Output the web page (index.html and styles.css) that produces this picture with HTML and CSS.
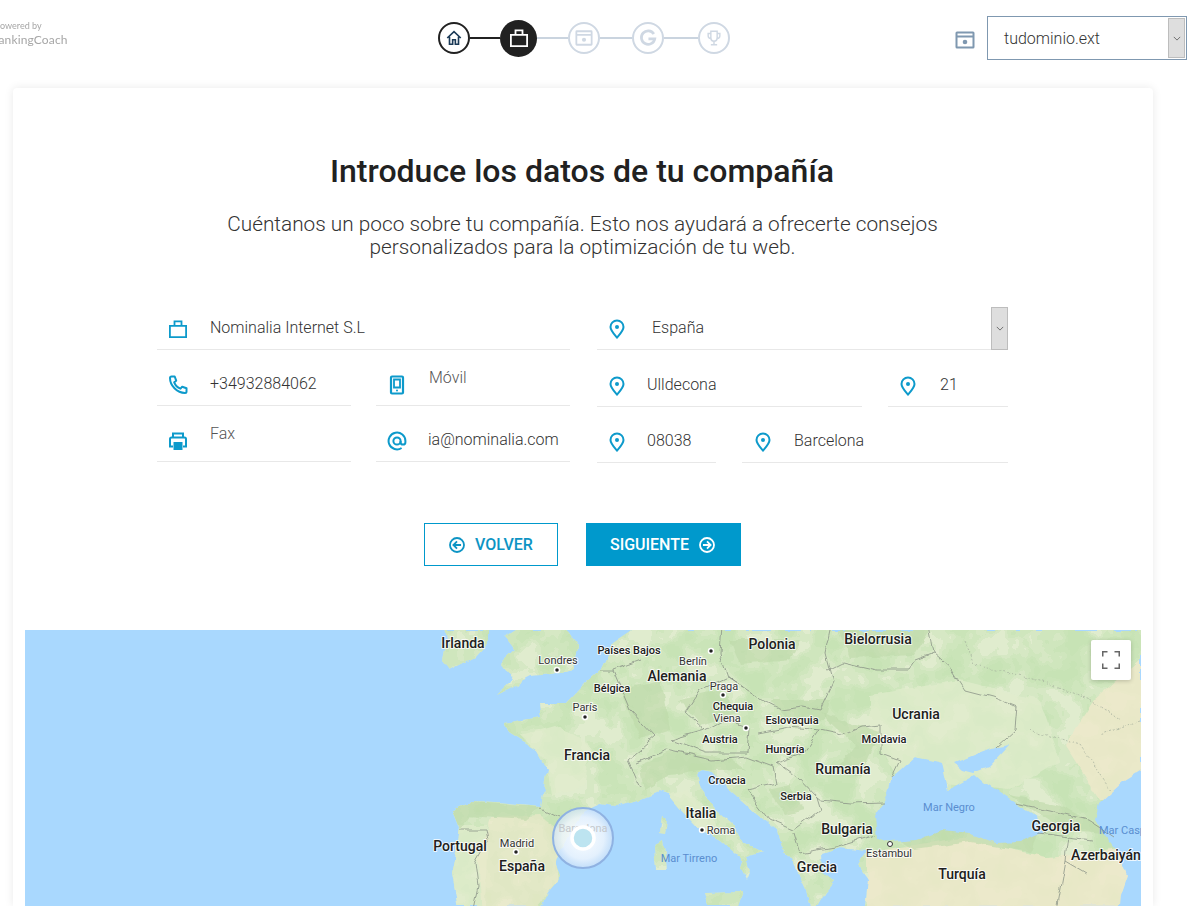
FILE: index.html
```html
<!DOCTYPE html>
<html lang="es">
<head>
<meta charset="utf-8">
<title>Introduce los datos de tu compañía</title>
<link rel="stylesheet" href="styles.css">
</head>
<body>
<svg class="defs" width="0" height="0" aria-hidden="true">
  <symbol id="i-case" viewBox="0 0 20 20"><path d="M1.900 6.900h16.200v11.200H1.900zM6.500 6.900V2.300h7v4.600" fill="none" stroke="currentColor" stroke-width="1.800"/></symbol>
  <symbol id="i-pin" viewBox="0 0 20 20"><path d="M10 18.500C6.500 14.500 3.500 11.500 3.500 8a6.500 6.500 0 0 1 13 0c0 3.500-3 6.500-6.500 10.500z" fill="none" stroke="currentColor" stroke-width="2"/><circle cx="10" cy="8" r="2" fill="currentColor"/></symbol>
  <symbol id="i-phone" viewBox="0 0 20 20"><path d="M3.500 1.500h3.200l1.500 4.200-2 1.600c1 2.600 3.500 5.200 6.300 6.400l1.700-2 4.300 1.600v3.200a1.500 1.500 0 0 1-1.500 1.500C9 18 2 10.500 2 3a1.500 1.500 0 0 1 1.500-1.500z" fill="none" stroke="currentColor" stroke-width="2" stroke-linejoin="round"/></symbol>
  <symbol id="i-mobile" viewBox="0 0 20 20"><path d="M5 1.500h10a1 1 0 0 1 1 1v15a1 1 0 0 1-1 1H5a1 1 0 0 1-1-1v-15a1 1 0 0 1 1-1z" fill="none" stroke="currentColor" stroke-width="2.200"/><path d="M7 4.500h6v8H7z" fill="none" stroke="currentColor" stroke-width="1.800"/><circle cx="10" cy="15.500" r="1" fill="currentColor"/></symbol>
  <symbol id="i-print" viewBox="0 0 20 20"><path d="M5 6V2.500h10V6" fill="none" stroke="currentColor" stroke-width="2"/><path d="M5 15.500H2V8a1.500 1.500 0 0 1 1.500-1.500h13A1.500 1.500 0 0 1 18 8v7.500h-3" fill="none" stroke="currentColor" stroke-width="2"/><path d="M5.500 11h9v8h-9z" fill="currentColor"/></symbol>
  <symbol id="i-at" viewBox="0 0 20 20"><circle cx="10" cy="10" r="3.600" fill="none" stroke="currentColor" stroke-width="2"/><path d="M13.600 10v1.200a2.400 2.400 0 0 0 4.800 0V10a8.400 8.400 0 1 0-3.800 7" fill="none" stroke="currentColor" stroke-width="2"/></symbol>
  <symbol id="i-web" viewBox="0 0 20 20"><path d="M2 2.500h16a.5.500 0 0 1 .5.500v14a.5.500 0 0 1-.5.500H2a.5.500 0 0 1-.5-.500V3a.5.500 0 0 1 .5-.500zM1.500 6.500h17" fill="none" stroke="currentColor" stroke-width="2"/><circle cx="10" cy="12" r="2.300" fill="currentColor"/></symbol>
  <symbol id="i-back" viewBox="0 0 20 20"><circle cx="10" cy="10" r="7.800" fill="none" stroke="currentColor" stroke-width="2"/><path d="M14.500 10h-8M10 6l-4 4 4 4" fill="none" stroke="currentColor" stroke-width="2"/></symbol>
  <symbol id="i-next" viewBox="0 0 20 20"><circle cx="10" cy="10" r="7.800" fill="none" stroke="currentColor" stroke-width="2"/><path d="M5.500 10h8M10 6l4 4-4 4" fill="none" stroke="currentColor" stroke-width="2"/></symbol>
</svg>

<header class="topbar">
  <div class="brand">
    <span class="brand-small">powered by</span>
    <span class="brand-name">rankingCoach</span>
  </div>
  <nav class="stepper">
    <span class="step step-done">
      <svg class="step-icon" viewBox="0 0 20 20"><path d="M2.500 10L10 3l7.500 7M5 8.500V17h3.500v-5h3v5H15V8.500" fill="none" stroke="currentColor" stroke-width="1.800"/></svg>
    </span>
    <span class="link link-a link-on"></span>
    <span class="step step-current"><svg class="step-icon-lg"><use href="#i-case"/></svg></span>
    <span class="link link-b"></span>
    <span class="step"><svg class="step-icon"><use href="#i-web"/></svg></span>
    <span class="link link-c"></span>
    <span class="step">
      <svg class="step-icon" viewBox="0 0 20 20"><path d="M16.500 5.500A7.500 7.500 0 1 0 17.500 11H10.500" fill="none" stroke="currentColor" stroke-width="3"/></svg>
    </span>
    <span class="link link-d"></span>
    <span class="step">
      <svg class="step-icon" viewBox="0 0 20 20"><path d="M6.500 2.500h7V10a3.500 3.500 0 0 1-7 0zM6.500 5H3.500v2.500a3 3 0 0 0 3 3M13.500 5h3v2.500a3 3 0 0 1-3 3M10 13.500V17M6.500 17.500h7" fill="none" stroke="currentColor" stroke-width="1.600"/></svg>
    </span>
  </nav>
  <div class="domain">
    <svg class="domain-icon"><use href="#i-web"/></svg>
    <div class="domain-select">
      <span class="domain-value">tudominio.ext</span>
      <span class="select-btn"><svg class="chev" viewBox="0 0 10 6"><path d="M1 1l4 4 4-4" fill="none" stroke="currentColor" stroke-width="1"/></svg></span>
    </div>
  </div>
</header>

<main class="card">
  <h1 class="title">Introduce los datos de tu compañía</h1>
  <p class="lead">Cuéntanos un poco sobre tu compañía. Esto nos ayudará a ofrecerte consejos<br>personalizados para la optimización de tu web.</p>

  <form class="form">
    <div class="col">
      <div class="row">
        <label class="field f-full"><svg class="ico"><use href="#i-case"/></svg><span class="val">Nominalia Internet S.L</span></label>
      </div>
      <div class="row">
        <label class="field f-half"><svg class="ico"><use href="#i-phone"/></svg><span class="val">+34932884062</span></label>
        <label class="field f-half"><svg class="ico"><use href="#i-mobile"/></svg><span class="val ph">Móvil</span></label>
      </div>
      <div class="row">
        <label class="field f-half"><svg class="ico"><use href="#i-print"/></svg><span class="val ph">Fax</span></label>
        <label class="field f-half"><svg class="ico"><use href="#i-at"/></svg><span class="val val-mail">ia@nominalia.com</span></label>
      </div>
    </div>
    <div class="col">
      <div class="row row-first">
        <label class="field f-full f-select"><svg class="ico ico-pin"><use href="#i-pin"/></svg><span class="val val-country">España</span>
          <span class="select-btn select-btn-tall"><svg class="chev" viewBox="0 0 10 6"><path d="M1 1l4 4 4-4" fill="none" stroke="currentColor" stroke-width="1"/></svg></span>
        </label>
      </div>
      <div class="row">
        <label class="field f-street"><svg class="ico ico-pin"><use href="#i-pin"/></svg><span class="val val-near">Ulldecona</span></label>
        <label class="field f-num"><svg class="ico ico-pin"><use href="#i-pin"/></svg><span class="val val-far">21</span></label>
      </div>
      <div class="row">
        <label class="field f-zip"><svg class="ico ico-pin"><use href="#i-pin"/></svg><span class="val val-near">08038</span></label>
        <label class="field f-city"><svg class="ico ico-pin"><use href="#i-pin"/></svg><span class="val val-city">Barcelona</span></label>
      </div>
    </div>
  </form>

  <div class="actions">
    <button type="button" class="btn btn-ghost"><svg class="btn-ico"><use href="#i-back"/></svg>VOLVER</button>
    <button type="button" class="btn btn-solid">SIGUIENTE<svg class="btn-ico"><use href="#i-next"/></svg></button>
  </div>

  <section class="map">
    <svg class="map-svg" viewBox="25 630 1116 276" width="1116" height="276">
      <defs>
        <clipPath id="landclip"><path d="M640 625H1150V915H865L869 880 858 865 866 850 840 847 822 853 823 872 835 882 826 892 812 915 806 890 793 863 781 847 777 830 755 813 732 793 712 772 702 770 697 773 701 790 716 810 732 823 743 843 762 852 747 857 751 870 747 880 741 868 743 860 720 840 697 827 678 807 668 795 659 792 640 800 617 807 600 805 585 812 572 828 562 848 556 860 561 877 548 892 536 915H459L452 873 455 860 459 827 453 812 471 802 497 803 530 806 541 807 547 770 536 750 509 733 505 723 540 717 538 703 566 703 585 683 600 670 613 643Z
          M444 625H490V640L475 657 450 670 442 660 446 640Z
          M524 625H563L578 647 574 670 551 675 532 677 497 695 513 680 501 663 515 650 505 637Z
          M663 817L669 822 667 833 661 832Z M653 847L663 840 667 870 655 870Z M705 893L743 892 735 915H712Z"/></clipPath>
        <filter id="mottle" x="0" y="0" width="100%" height="100%" color-interpolation-filters="sRGB">
          <feTurbulence type="fractalNoise" baseFrequency="0.035" numOctaves="3" seed="7"/>
          <feColorMatrix type="matrix" values="0 0 0 0 0.78  0 0 0 0 0.89  0 0 0 0 0.71  1.8 0 0 0 -0.35"/>
          <feComponentTransfer><feFuncA type="discrete" tableValues="0 0 0.4 0.7 0.9 1"/></feComponentTransfer>
        </filter>
        <filter id="rough" filterUnits="userSpaceOnUse" x="25" y="630" width="1116" height="276" color-interpolation-filters="sRGB">
          <feTurbulence type="fractalNoise" baseFrequency="0.07" numOctaves="2" seed="3"/>
          <feDisplacementMap in="SourceGraphic" scale="7" xChannelSelector="R" yChannelSelector="G"/>
        </filter>
        <radialGradient id="halo"><stop offset="0" stop-color="#fff" stop-opacity=".95"/><stop offset=".7" stop-color="#eef5fd" stop-opacity=".85"/><stop offset="1" stop-color="#cfe2f8" stop-opacity=".7"/></radialGradient>
      </defs>
      <rect class="sea" x="25" y="630" width="1116" height="276"/>
      <g filter="url(#rough)">
        <g clip-path="url(#landclip)">
          <rect class="land" x="25" y="630" width="1116" height="276"/>
          <rect x="25" y="630" width="1116" height="276" filter="url(#mottle)"/>
          <path class="plain" d="M870 695L960 680 1040 700 1060 760 1010 790 900 780 870 730Z"/>
          <path class="plain" d="M640 800L690 790 720 830 700 840 660 805Z"/>
          <path class="plain" d="M520 735L555 725 590 745 585 785 550 795 545 760Z"/>
          <path class="plain" d="M452 825L488 825 485 906H452Z"/>
          <path class="sand" d="M1095 700L1141 660V800L1100 800 1065 745Z"/>
          <path class="sand" d="M868 852L960 838 1050 858 1141 845V915H868Z"/>
          <path class="sand-soft" d="M492 818L540 815 560 830 558 880 530 915H482L478 860Z"/>
          <path class="forest" d="M453 812L471 802 540 807 525 820 470 816 460 830Z"/>
          <path class="forest" d="M640 765L670 752 730 758 745 770 700 770 670 775 645 790Z"/>
          <path class="forest" d="M820 712L880 732 860 775 835 770 855 745Z"/>
          <path class="forest" d="M770 700L830 700 825 720 790 722Z"/>
          <path class="forest" d="M768 790L790 785 805 810 785 815Z"/>
          <path class="forest" d="M1010 795L1060 805 1115 835 1060 828Z"/>
          <path class="forest" d="M890 835L960 822 1040 830 1030 852 970 842 915 850Z"/>
          <path class="forest" d="M680 700L720 690 740 712 700 725Z"/>
          <path class="forest" d="M730 640L800 640 790 660 740 665Z"/>
          <path class="forest" d="M840 630L930 630 915 655 850 658Z"/>
          <path class="forest" d="M620 690L660 680 670 730 640 740Z"/>
        </g>
        <path class="sea" d="M875 817L887 797 892 777 915 757 942 763 948 790 975 775 984 783 1015 803 1038 817 1042 833 1022 842 996 843 969 833 942 830 915 840 892 842 877 837Z"/>
        <path class="sea" d="M954 763L992 748 1009 745 988 767 973 773 962 770Z"/>
        <path class="sea" d="M1150 765L1124 781 1099 804 1095 819 1105 835 1118 852 1127 875 1120 895 1118 915H1150Z"/>
        <g class="borders">
          <path d="M722 625L720 653 728 677 743 687 762 700 781 710 804 707 820 710 833 683 825 653 831 625"/>
          <path d="M827 670L843 662 877 670 908 670 915 660 934 653 929 625"/>
          <path d="M934 653L950 667 965 690 992 697 1017 707 1015 730 996 747"/>
          <path d="M758 733L789 727 820 730 843 735 862 727 881 725 881 753 900 760 892 777"/>
          <path d="M820 730L804 753 777 763 797 777 816 797 820 800 850 803 885 802"/>
          <path d="M670 740L705 753 747 753 749 728 724 720 705 730 670 740"/>
          <path d="M613 670L630 710 655 737 628 760 640 787"/>
          <path d="M636 763L667 750 712 760 747 757 774 767 777 783 747 790 770 820 793 830 820 810 816 797"/>
          <path d="M793 833L799 853 835 847 858 840 875 835"/>
          <path d="M743 687L728 677 700 690 685 712 705 730"/>
          <path d="M1015 803L1049 810 1088 820 1114 837"/>
          <path d="M1038 833L1068 837 1091 840"/>
          <path d="M1065 860L1087 873M1065 860L1068 837M1065 860L1055 915"/>
          <path d="M459 830L486 830 488 840 475 863 478 887 473 910"/>
          <path d="M540 808L559 817"/>
          <path d="M600 670L613 670 640 660"/>
        </g>
        <g class="dashes">
          <path d="M965 640L975 665 1040 680 1090 700 1120 720"/>
          <path d="M1030 730L1080 745 1110 790M1141 720L1100 735"/>
        </g>
      </g>

      <g class="dots">
        <circle cx="557" cy="670" r="2.500"/><circle cx="711" cy="651" r="2.500"/><circle cx="723" cy="695" r="2.500"/>
        <circle cx="585" cy="717" r="2.500"/><circle cx="746" cy="728" r="2.500"/><circle cx="702" cy="830" r="2.500"/>
        <circle cx="516" cy="852" r="2.500"/>
      </g>
      <circle class="dot-open" cx="890" cy="844" r="2.500"/>

      <g class="lbl lbl-l">
        <text x="463" y="648">Irlanda</text><text x="772" y="649">Polonia</text><text x="878" y="644">Bielorrusia</text>
        <text x="677" y="681">Alemania</text><text x="916" y="719">Ucrania</text><text x="587" y="760">Francia</text>
        <text x="843" y="774">Rumanía</text><text x="701" y="818">Italia</text><text x="1056" y="831">Georgia</text>
        <text x="847" y="834">Bulgaria</text><text x="460" y="851">Portugal</text><text x="1106" y="860">Azerbaiyán</text>
        <text x="522" y="871">España</text><text x="817" y="872">Grecia</text><text x="962" y="879">Turquía</text>
      </g>
      <g class="lbl lbl-m">
        <text x="629" y="654">Países Bajos</text><text x="612" y="692">Bélgica</text><text x="733" y="710">Chequia</text>
        <text x="792" y="724">Eslovaquia</text><text x="884" y="743">Moldavia</text><text x="720" y="743">Austria</text>
        <text x="785" y="753">Hungría</text><text x="727" y="784">Croacia</text><text x="796" y="800">Serbia</text>
      </g>
      <g class="lbl lbl-s">
        <text x="558" y="664">Londres</text><text x="693" y="665">Berlín</text><text x="724" y="690">Praga</text>
        <text x="585" y="711">París</text><text x="727" y="722">Viena</text><text x="721" y="834">Roma</text>
        <text x="517" y="847">Madrid</text><text x="889" y="857">Estambul</text>
      </g>
      <g class="lbl lbl-w">
        <text x="949" y="811">Mar Negro</text><text x="689" y="862">Mar Tirreno</text><text x="1127" y="834">Mar Caspio</text>
      </g>

      <circle class="halo" cx="583" cy="838" r="30"/>
      <text class="halo-text" x="583" y="832">Barcelona</text>
      <circle class="core" cx="583" cy="838" r="11"/>
    </svg>
    <button type="button" class="fullscreen" aria-label="Pantalla completa">
      <svg class="fs-ico" viewBox="0 0 18 18"><path d="M0 5.500V0h5.500M12.500 0H18v5.500M18 12.500V18h-5.500M5.500 18H0v-5.500" fill="none" stroke="currentColor" stroke-width="3"/></svg>
    </button>
  </section>
</main>
</body>
</html>
```
FILE: styles.css
```css
* { box-sizing: border-box; }
html, body { margin: 0; height: 906px; overflow: hidden; }
body { background: #fff; font-family: Roboto, "Liberation Sans", sans-serif; color: #212121; }
.defs { display: block; height: 0; }

.topbar { height: 88px; display: grid; grid-template-columns: 438px 292px 1fr; padding-bottom: 12px; align-items: center; }
.brand { display: flex; flex-direction: column; margin-left: -5px; margin-top: -8px; font-family: Lato, "Liberation Sans", sans-serif; color: #a6a6a6; filter: blur(.3px); }
.brand-small { font-size: 9px; line-height: 12px; }
.brand-name { font-size: 12px; line-height: 16px; margin-left: -1px; letter-spacing: .15px; }

.stepper { display: flex; align-items: center; }
.step { width: 32px; height: 32px; flex: none; border-radius: 50%; border: 2px solid #cfd8e3; color: #cfd8e3; display: flex; align-items: center; justify-content: center; background: #fff; }
.step-done { border-color: #212121; color: #1b3a57; }
.step-current { width: 37px; height: 37px; border: 0; background: #212121; color: #fff; }
.step-icon { width: 18px; height: 18px; }
.step-icon-lg { width: 20px; height: 20px; }
.link { height: 2px; background: #cad4df; flex: none; }
.link-a { width: 30px; }
.link-b { width: 31px; }
.link-c { width: 32px; }
.link-d { width: 34px; }
.link-on { background: #212121; }

.domain { display: flex; align-items: center; justify-content: flex-end; padding-right: 1px; gap: 12px; }
.domain-icon { width: 20px; height: 20px; color: #7f98b0; margin-top: 3px; }
.domain-select { width: 200px; height: 44px; border: 1px solid #7f98b0; display: flex; align-items: stretch; padding: 1px; justify-content: space-between; }
.domain-value { font-size: 16px; font-weight: 300; color: #333; padding-left: 15px; align-self: center; }
.select-btn { width: 17px; background: #dedede; border: 1px solid #bdbdbd; display: flex; align-items: center; justify-content: center; color: #555; }
.chev { width: 8px; height: 5px; }

.card { width: 1140px; height: 818px; margin-left: 13px; background: #fff; border-radius: 4px 4px 0 0; box-shadow: 0 0 10px rgba(0,0,0,.09); padding: 64px 12px 0; }
.title { margin: 0; padding-right: 2px; text-align: center; font-size: 32px; line-height: 38px; font-weight: 500; color: #212121; }
.lead { margin: 23px 0 0; padding-right: 1px; text-align: center; font-size: 20.8px; line-height: 23px; font-weight: 300; color: #333; }

.form { display: flex; gap: 27px; width: 851px; margin: 48px auto 0 132px; }
.col { display: flex; flex-direction: column; gap: 13px; }
.col:first-child { width: 413px; }
.col:last-child { width: 411px; }
.row { display: flex; justify-content: space-between; }
.row-first { margin-bottom: 1px; }
.field { height: 43px; display: flex; align-items: center; border-bottom: 1px solid #e8e8e8; padding-left: 11px; padding-bottom: 2px; font-size: 16px; font-weight: 300; color: #333; position: relative; }
.f-full { width: 100%; }
.f-half { width: 194px; }
.f-street { width: 265px; }
.f-num { width: 120px; }
.f-zip { width: 119px; }
.f-city { width: 266px; padding-left: 12px; }
.ico { width: 20px; height: 20px; flex: none; color: #0d9acb; margin-top: 3px; }
.ico-pin { margin-left: -1px; }
.val { margin-left: 22px; white-space: nowrap; }
.val-mail { margin-left: 21px; }
.val-country { margin-left: 25px; }
.val-near { margin-left: 20px; }
.val-far { margin-left: 22px; }
.val-city { margin-left: 21px; }
.ph { margin-top: -11px; color: #555; }
.f-select { justify-content: flex-start; }
.select-btn-tall { position: absolute; right: 0; top: 0; height: 43px; border-color: #bdbdbd; }

.actions { display: flex; justify-content: center; gap: 28px; margin-top: 60px; padding-right: 2px; }
.btn { height: 43px; display: flex; align-items: center; justify-content: center; gap: 9px; font: 500 16px/1 Roboto, "Liberation Sans", sans-serif; border: 1px solid #0099cc; }
.btn-ghost { width: 134px; background: #fff; color: #0d94c4; }
.btn-solid { width: 155px; background: #0099cc; color: #fff; }
.btn-ico { width: 18px; height: 18px; flex: none; }

.map { position: relative; margin-top: 64px; width: 1116px; height: 276px; overflow: hidden; }
.map-svg { display: block; }
.sea { fill: #a9d8fe; }
.land { fill: #e0ecce; }
.plain { fill: #e1edcd; opacity: .7; }
.sand { fill: #efe9cb; opacity: .8; }
.sand-soft { fill: #efe9cb; opacity: .6; }
.forest { fill: #bcd9a9; opacity: .6; }
.borders { fill: none; stroke: #8c9488; stroke-width: .8; }
.dashes { fill: none; stroke: #a3ad9c; stroke-width: .7; stroke-dasharray: 2 2; }
.dots circle { fill: #222; stroke: #fff; stroke-width: 1.500; }
.dot-open { fill: #fff; stroke: #333; stroke-width: 1; }
.lbl text { font-family: Roboto, "Liberation Sans", sans-serif; text-anchor: middle; paint-order: stroke; stroke: rgba(255,255,255,.8); stroke-width: 2px; stroke-linejoin: round; fill: #202020; }
.lbl-l text { font-size: 14px; font-weight: 500; }
.lbl-m text { font-size: 11px; font-weight: 500; }
.lbl-s text { font-size: 11px; font-weight: 400; fill: #333; }
.lbl-w text { font-size: 11px; fill: #5a8ed0; stroke: none; }
.halo { fill: url(#halo); stroke: #8fb2e2; stroke-width: 2; }
.halo-text { font: 400 11px Roboto, "Liberation Sans", sans-serif; text-anchor: middle; fill: #c4c8cc; }
.core { fill: #bde4f0; stroke: #fff; stroke-width: 3.500; }
.fullscreen { position: absolute; right: 10px; top: 10px; width: 40px; height: 40px; background: #fff; border: 0; border-radius: 2px; box-shadow: 0 1px 4px rgba(0,0,0,.2); display: flex; align-items: center; justify-content: center; color: #666; padding: 0; }
.fs-ico { width: 18px; height: 18px; }
```
